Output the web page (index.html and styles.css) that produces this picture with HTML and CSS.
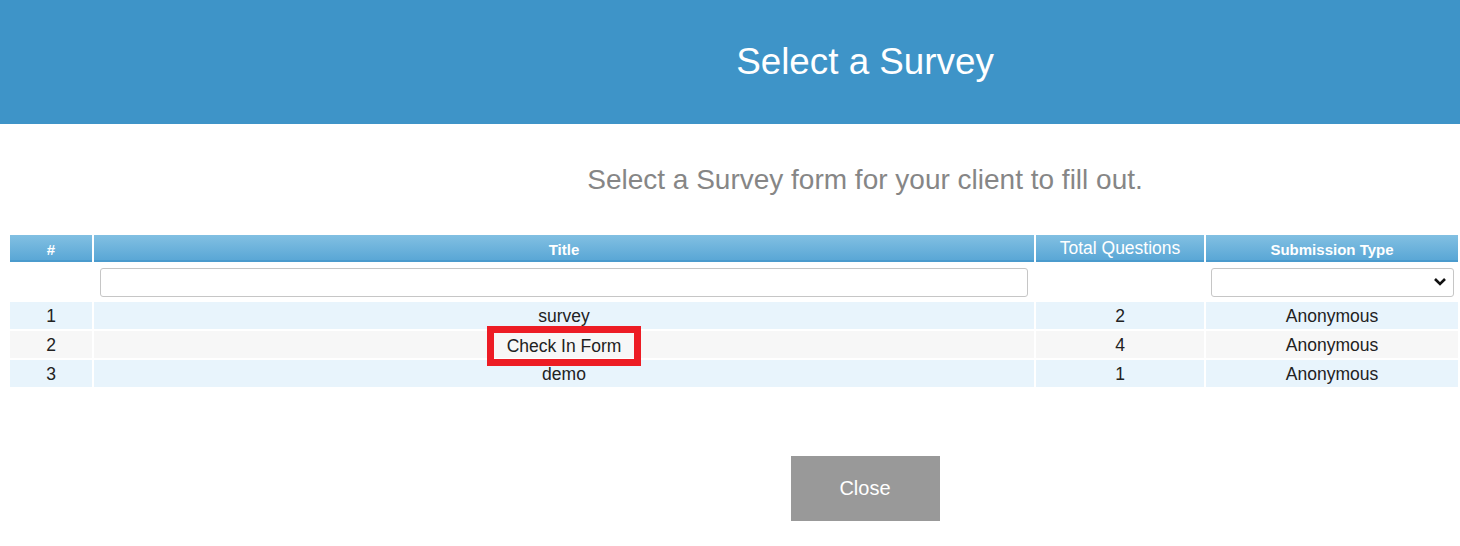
FILE: index.html
```html
<!DOCTYPE html>
<html>
<head>
<meta charset="utf-8">
<link rel="stylesheet" href="styles.css">
</head>
<body>
<header class="modal-header">
  <h1 class="modal-title">Select a Survey</h1>
</header>
<main class="modal-body">
  <p class="intro">Select a Survey form for your client to fill out.</p>
  <table class="grid">
    <colgroup>
      <col class="c-num"><col class="c-title"><col class="c-total"><col class="c-type">
    </colgroup>
    <thead>
      <tr class="head">
        <th class="bold">#</th>
        <th class="bold">Title</th>
        <th class="plain">Total Questions</th>
        <th class="bold">Submission Type</th>
      </tr>
      <tr class="filters">
        <td></td>
        <td class="f-title"><input class="filter-input" type="text"></td>
        <td></td>
        <td class="f-type"><div class="filter-select"><svg class="chev" width="14" height="10" viewBox="0 0 14 10"><path d="M2 2 L7 7 L12 2" fill="none" stroke="#111" stroke-width="2.6"/></svg></div></td>
      </tr>
    </thead>
    <tbody>
      <tr class="odd"><td>1</td><td>survey</td><td>2</td><td>Anonymous</td></tr>
      <tr class="even"><td>2</td><td><span class="highlight">Check In Form</span></td><td>4</td><td>Anonymous</td></tr>
      <tr class="odd"><td>3</td><td>demo</td><td>1</td><td>Anonymous</td></tr>
    </tbody>
  </table>
  <div class="actions">
    <button class="close-btn" type="button">Close</button>
  </div>
</main>
</body>
</html>
```
FILE: styles.css
```css
html, body {
  margin: 0;
  padding: 0;
  background: #fff;
  font-family: "Liberation Sans", Arial, sans-serif;
}
.modal-header {
  background: #3e94c8;
  height: 124px;
  display: flex;
  align-items: center;
  justify-content: center;
  padding-left: 270px;
}
.modal-title {
  margin: 0;
  color: #fff;
  font-weight: normal;
  font-size: 36.8px;
  line-height: 1;
}
.modal-body {
  padding-top: 40px;
}
.intro {
  margin: 0;
  padding-left: 270px;
  text-align: center;
  font-size: 28px;
  line-height: 32px;
  color: #868686;
}
.grid {
  margin: 37px 0 0 8px;
  width: 1452px;
  border-collapse: separate;
  border-spacing: 2px;
  table-layout: fixed;
  font-size: 17.5px;
  color: #222;
}
.c-num { width: 82px; }
.c-title { width: 940px; }
.c-total { width: 168px; }
.c-type { width: 252px; }
.head th {
  height: 27px;
  padding: 0;
  color: #fff;
  background: linear-gradient(#82c0e2, #5aa7d6);
  border-bottom: 2px solid #4b9bcd;
  box-sizing: border-box;
  text-align: center;
  vertical-align: middle;
}
.head th.bold {
  font-weight: bold;
  font-size: 15px;
  padding-top: 4px;
}
.head th.plain {
  font-weight: normal;
  font-size: 17.5px;
  padding-top: 1px;
}
.filters td {
  height: 36px;
  padding: 0;
  vertical-align: middle;
}
.filters td.f-title { padding: 0 6px; }
.filters td.f-type { padding: 0 4px 0 5px; }
.filter-input, .filter-select {
  display: block;
  width: 100%;
  height: 29px;
  box-sizing: border-box;
  border: 1px solid #c6c6c6;
  border-radius: 3px;
  background: #fff;
  margin: 0;
  padding: 0;
}
.filter-select {
  display: flex;
  align-items: center;
  justify-content: flex-end;
  padding-right: 6px;
}
.grid tbody td {
  height: 27px;
  padding: 0;
  text-align: center;
  vertical-align: middle;
  line-height: 20px;
}
.odd td { background: #e8f4fc; }
.even td { background: #f7f7f7; }
.highlight {
  display: inline-block;
  border: 7px solid #ed1c24;
  padding: 3px 13px 3px;
  line-height: 20px;
  margin: -8px 0 -8px;
  position: relative;
  top: 1px;
}
.actions {
  display: flex;
  justify-content: center;
  padding-left: 270px;
  margin-top: 67px;
}
.close-btn {
  width: 149px;
  height: 65px;
  border: none;
  background: #999;
  color: #fff;
  font-family: "Liberation Sans", Arial, sans-serif;
  font-size: 20px;
  padding: 0;
}
```
